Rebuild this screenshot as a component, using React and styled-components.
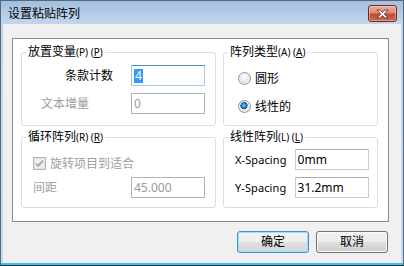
import styled, { createGlobalStyle, css } from "styled-components";

const GlobalStyle = createGlobalStyle`
  html, body { margin: 0; padding: 0; background: #fff; }
  body {
    font-family: "Noto Sans", "Noto Sans CJK SC", sans-serif;
    font-size: 12px;
    color: #000;
  }
  * { box-sizing: border-box; }
`;

const Window = styled.div`
  width: 404px;
  height: 266px;
  display: flex;
  flex-direction: column;
  border: 1px solid #56687c;
  border-bottom-color: #1d2a36;
  padding: 0 2px 2px;
  background: linear-gradient(
    to bottom,
    #a3bfdf 0,
    #c2d7ee 23px,
    #c8dbf0 calc(100% - 2px),
    #3cc3ee calc(100% - 2px)
  );
`;

const TitleBar = styled.div`
  height: 23px;
  flex: none;
  display: flex;
  align-items: center;
  justify-content: space-between;
  padding: 0 4px 0 5px;
`;

const Title = styled.span`
  font-size: 12px;
  line-height: 16px;
  color: #000;
  font-family: "Noto Sans CJK SC", sans-serif;
`;

const CloseButton = styled.div`
  align-self: flex-start;
  margin-top: 4px;
  width: 29px;
  height: 17px;
  border: 1px solid #6e2a20;
  border-radius: 3px;
  background: linear-gradient(
    to bottom,
    #e9b0a2 0%,
    #d98a78 45%,
    #c3482f 55%,
    #cf6a52 100%
  );
  box-shadow: inset 0 0 0 1px rgba(255, 220, 210, 0.45);
  display: flex;
  align-items: center;
  justify-content: center;
`;

const Client = styled.div`
  flex: 1;
  background: #f0f0f0;
  padding: 14px 12px 10px 9px;
  display: flex;
  flex-direction: column;
`;

const Panel = styled.div`
  height: 184px;
  flex: none;
  border: 1px solid #898c95;
  background: #fff;
  display: grid;
  grid-template-columns: 195px 155px;
  grid-template-rows: 81px 78px;
  column-gap: 7px;
  row-gap: 4px;
  padding: 6px 10px 13px 8px;
`;

const Group = styled.fieldset`
  margin: 0;
  padding: 0;
  min-width: 0;
  border: 1px solid #d5dfe5;
  border-radius: 3px;
`;

const Legend = styled.legend`
  margin-left: 4px;
  padding: 0 2px;
  font-size: 12px;
  line-height: 14px;
  color: #000;
`;

const Mn = styled.span`
  font-size: 10px;
`;

const Body = styled.div`
  display: grid;
  grid-template-columns: ${(p) => p.$cols || "1fr"};
  grid-auto-rows: 21px;
  align-items: center;
  column-gap: ${(p) => p.$colGap || 0}px;
  row-gap: ${(p) => p.$rowGap}px;
  padding: ${(p) => p.$pad};
`;

const Label = styled.span`
  justify-self: ${(p) => (p.$right ? "end" : "start")};
  line-height: 16px;
  white-space: nowrap;
  color: ${(p) => (p.$disabled ? "#a0a0a0" : "#000")};
`;

const LatinLabel = styled(Label)`
  font-size: 11px;
  letter-spacing: 0.1px;
`;

const TextBox = styled.div`
  height: 21px;
  padding: 0 2px;
  font-size: 12px;
  line-height: 19px;
  background: #fff;
  white-space: nowrap;
  color: ${(p) => (p.$disabled ? "#9a9a9a" : "#000")};
  border: 1px solid #c9ccd2;
  border-top-color: #abadb3;
  ${(p) =>
    p.$disabled &&
    css`
      border-color: #b2b2b2;
    `}
  ${(p) =>
    p.$focused &&
    css`
      border-color: #a7c9e6;
      border-top-color: #4f8cc3;
    `}
`;

const Selected = styled.span`
  display: inline-block;
  background: #3399ff;
  color: #fff;
  line-height: 14px;
  padding: 0 1px;
`;

const Option = styled.div`
  display: flex;
  align-items: center;
  gap: 4px;
  line-height: 16px;
  color: ${(p) => (p.$disabled ? "#a0a0a0" : "#000")};
  grid-column: 1 / -1;
`;

const Radio = styled.span`
  width: 13px;
  height: 13px;
  flex: none;
  border-radius: 50%;
  border: 1px solid #929292;
  background: ${(p) =>
      p.$checked
        ? "radial-gradient(circle at 45% 40%, #8fd2ff 0, #2c86d2 2px, #124e90 3.4px, transparent 3.9px),"
        : ""}
    radial-gradient(circle at 50% 35%, #ffffff 0, #e4e4e4 55%, #c9c9c9 100%);
  box-shadow: inset 0 0 0 1px #f4f4f4;
`;

const ButtonRow = styled.div`
  margin-top: 9px;
  display: flex;
  justify-content: flex-end;
  gap: 7px;
  padding-right: 1px;
`;

const Button = styled.div`
  width: 72px;
  height: 22px;
  border-radius: 3px;
  border: 1px solid #707070;
  background: linear-gradient(
    to bottom,
    #f2f2f2 0%,
    #ebebeb 50%,
    #dddddd 50%,
    #cfcfcf 100%
  );
  box-shadow: inset 0 0 0 1px #fbfbfb;
  display: flex;
  align-items: center;
  justify-content: center;
  font-size: 12px;
  line-height: 16px;
  ${(p) =>
    p.$default &&
    css`
      border-color: #3c8fd0;
      box-shadow: inset 0 0 0 1px #9fe0f8;
      background: linear-gradient(
        to bottom,
        #f4f4f4 0%,
        #ededed 50%,
        #e0e0e0 50%,
        #d6d6d6 100%
      );
    `}
`;

function CloseGlyph() {
  return (
    <svg width="13" height="10" viewBox="0 0 13 10">
      <path
        d="M1 1h3l2.5 2.3L9 1h3L8.3 5 12 9H9L6.5 6.7 4 9H1l3.7-4z"
        fill="#fff"
        stroke="#4b2a25"
        strokeWidth="0.8"
        strokeLinejoin="round"
      />
    </svg>
  );
}

function CheckBox() {
  return (
    <svg width="13" height="13" viewBox="0 0 13 13">
      <rect x="0.5" y="0.5" width="12" height="12" fill="#f4f4f4" stroke="#b4b4b4" />
      <rect x="1.5" y="1.5" width="10" height="10" fill="#f0f0f0" stroke="#e2e2e2" />
      <path
        d="M3 6.5l2.2 2.4L10 3.6"
        fill="none"
        stroke="#a9a9a9"
        strokeWidth="1.8"
      />
    </svg>
  );
}

export default function App() {
  return (
    <>
      <GlobalStyle />
      <Window>
        <TitleBar>
          <Title>设置粘贴阵列</Title>
          <CloseButton>
            <CloseGlyph />
          </CloseButton>
        </TitleBar>
        <Client>
          <Panel>
            <Group>
              <Legend>
                放置变量<Mn>(P) (<u>P</u>)</Mn>
              </Legend>
              <Body $cols="1fr 74px" $colGap={18} $rowGap={7} $pad="6px 10px 0 19px">
                <Label $right>条款计数</Label>
                <TextBox $focused>
                  <Selected>4</Selected>
                </TextBox>
                <Label $disabled>文本增量</Label>
                <TextBox $disabled>0</TextBox>
              </Body>
            </Group>

            <Group>
              <Legend>
                阵列类型<Mn>(A) (<u>A</u>)</Mn>
              </Legend>
              <Body $rowGap={7} $pad="9px 0 0 14px">
                <Option>
                  <Radio />
                  圆形
                </Option>
                <Option>
                  <Radio $checked />
                  线性的
                </Option>
              </Body>
            </Group>

            <Group>
              <Legend>
                循环阵列<Mn>(R) (<u>R</u>)</Mn>
              </Legend>
              <Body $cols="1fr 74px" $rowGap={3} $pad="9px 10px 0 11px">
                <Option $disabled>
                  <CheckBox />
                  旋转项目到适合
                </Option>
                <Label $disabled>间距</Label>
                <TextBox $disabled>45.000</TextBox>
              </Body>
            </Group>

            <Group>
              <Legend>
                线性阵列<Mn>(L) (<u>L</u>)</Mn>
              </Legend>
              <Body $cols="1fr 74px" $colGap={8} $rowGap={7} $pad="5px 10px 0 11px">
                <LatinLabel>X-Spacing</LatinLabel>
                <TextBox>0mm</TextBox>
                <LatinLabel>Y-Spacing</LatinLabel>
                <TextBox>31.2mm</TextBox>
              </Body>
            </Group>
          </Panel>
          <ButtonRow>
            <Button $default>确定</Button>
            <Button>取消</Button>
          </ButtonRow>
        </Client>
      </Window>
    </>
  );
}
